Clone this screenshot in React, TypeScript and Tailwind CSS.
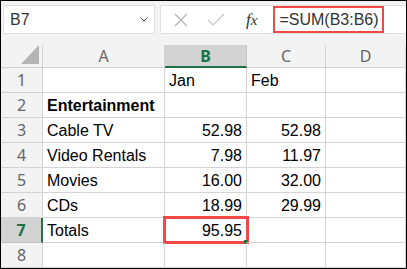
const COLS = ['A', 'B', 'C', 'D'];

type Row = { n: number; a?: string; b?: string; c?: string; bold?: boolean };

const ROWS: Row[] = [
  { n: 1, b: 'Jan', c: 'Feb' },
  { n: 2, a: 'Entertainment', bold: true },
  { n: 3, a: 'Cable TV', b: '52.98', c: '52.98' },
  { n: 4, a: 'Video Rentals', b: '7.98', c: '11.97' },
  { n: 5, a: 'Movies', b: '16.00', c: '32.00' },
  { n: 6, a: 'CDs', b: '18.99', c: '29.99' },
  { n: 7, a: 'Totals', b: '95.95' },
  { n: 8 },
];

const isNum = (v?: string) => !!v && /^[0-9.]+$/.test(v);

function FormulaBar() {
  return (
    <div className="h-[44px] flex items-start pt-[4px] pl-[2px] pr-0 bg-[#f3f3f3]">
      <div className="w-[152px] h-[29px] bg-white border border-[#e1e1e1] flex items-center pl-[6px] pr-[6px]">
        <span className="text-[16px] text-[#333]">B7</span>
        <svg className="ml-auto" width="8" height="5" viewBox="0 0 8 5">
          <path d="M0.5 0.5 L4 4 L7.5 0.5" fill="none" stroke="#444" strokeWidth="1" />
        </svg>
      </div>
      <div className="ml-[5px] flex-1 h-[29px] bg-white border border-[#e1e1e1] border-r-0 flex items-center">
        <svg className="ml-[12px]" width="16" height="16" viewBox="0 0 16 16">
          <path d="M2 2 L14 14 M14 2 L2 14" stroke="#b3b3b3" strokeWidth="1.2" fill="none" />
        </svg>
        <svg className="ml-[18px]" width="18" height="14" viewBox="0 0 18 14">
          <path d="M1 7 L6 12 L17 1" stroke="#c4c4c4" strokeWidth="1.1" fill="none" />
        </svg>
        <span className="ml-[21px] text-[17px] text-[#333] leading-none" style={{ fontFamily: '"Liberation Serif", serif' }}>
          <span className="italic">f</span>
          <span className="italic text-[15px]">x</span>
        </span>
        <div className="ml-[16px] h-[27px] w-[111px] border-[2px] border-[#f24848] flex items-center pl-[4px]">
          <span className="text-[16px] text-[#333]">=SUM(B3:B6)</span>
        </div>
      </div>
    </div>
  );
}

export default function App() {
  return (
    <div
      className="w-[407px] h-[269px] border border-black bg-white overflow-hidden"
      style={{ fontFamily: '"Liberation Sans", Arial, sans-serif' }}
    >
      <FormulaBar />
      <div className="grid grid-cols-[42px_122px_82px_79px_80px] grid-rows-[23px_repeat(8,25px)]">
        {/* select all corner */}
        <div className="bg-[#f3f3f3] border-r border-b border-[#d4d4d4] flex items-end justify-end pr-[3px] pb-[3px]">
          <svg width="18" height="19" viewBox="0 0 18 19">
            <path d="M18 0 L18 19 L0 19 Z" fill="#b5b5b5" />
          </svg>
        </div>
        {COLS.map((c) => {
          const sel = c === 'B';
          return (
            <div
              key={c}
              className={
                sel
                  ? 'bg-[#d3d3d3] border-r border-[#c4c4c4] border-b-[2px] border-b-[#217346] flex items-center justify-center text-[16px] font-bold text-[#217346]'
                  : 'bg-[#f3f3f3] border-r border-b border-[#d4d4d4] flex items-center justify-center text-[16px] text-[#666]'
              }
              style={{ fontFamily: '"Noto Sans", sans-serif' }}
            >
              {c}
            </div>
          );
        })}
        {ROWS.map((r) => {
          const sel = r.n === 7;
          return [
            <div
              key={`h${r.n}`}
              className={
                sel
                  ? 'bg-[#d3d3d3] border-b border-[#c4c4c4] border-r-[2px] border-r-[#217346] flex items-center justify-center text-[16px] font-bold text-[#217346]'
                  : 'bg-[#f3f3f3] border-r border-b border-[#d4d4d4] flex items-center justify-center text-[16px] text-[#666]'
              }
              style={{ fontFamily: '"Noto Sans", sans-serif' }}
            >
              {r.n}
            </div>,
            ...[r.a, r.b, r.c, undefined].map((v, i) => (
              <div
                key={`${r.n}-${i}`}
                className={
                  'relative border-r border-b border-[#d4d4d4] flex items-end pb-[3px] text-[16px] leading-none text-black whitespace-nowrap ' +
                  (isNum(v) ? 'justify-end pr-[4px]' : 'justify-start pl-[4px]') +
                  (r.bold ? ' font-bold' : '')
                }
              >
                {v}
                {sel && i === 1 && (
                  <>
                    <div className="absolute -left-[2px] -top-[2px] w-[86px] h-[28px] border-[3px] border-[#f24848]" />
                    <div className="absolute -right-[2px] -bottom-[2px] w-[4px] h-[4px] bg-[#217346]" />
                  </>
                )}
              </div>
            )),
          ];
        })}
      </div>
    </div>
  );
}
